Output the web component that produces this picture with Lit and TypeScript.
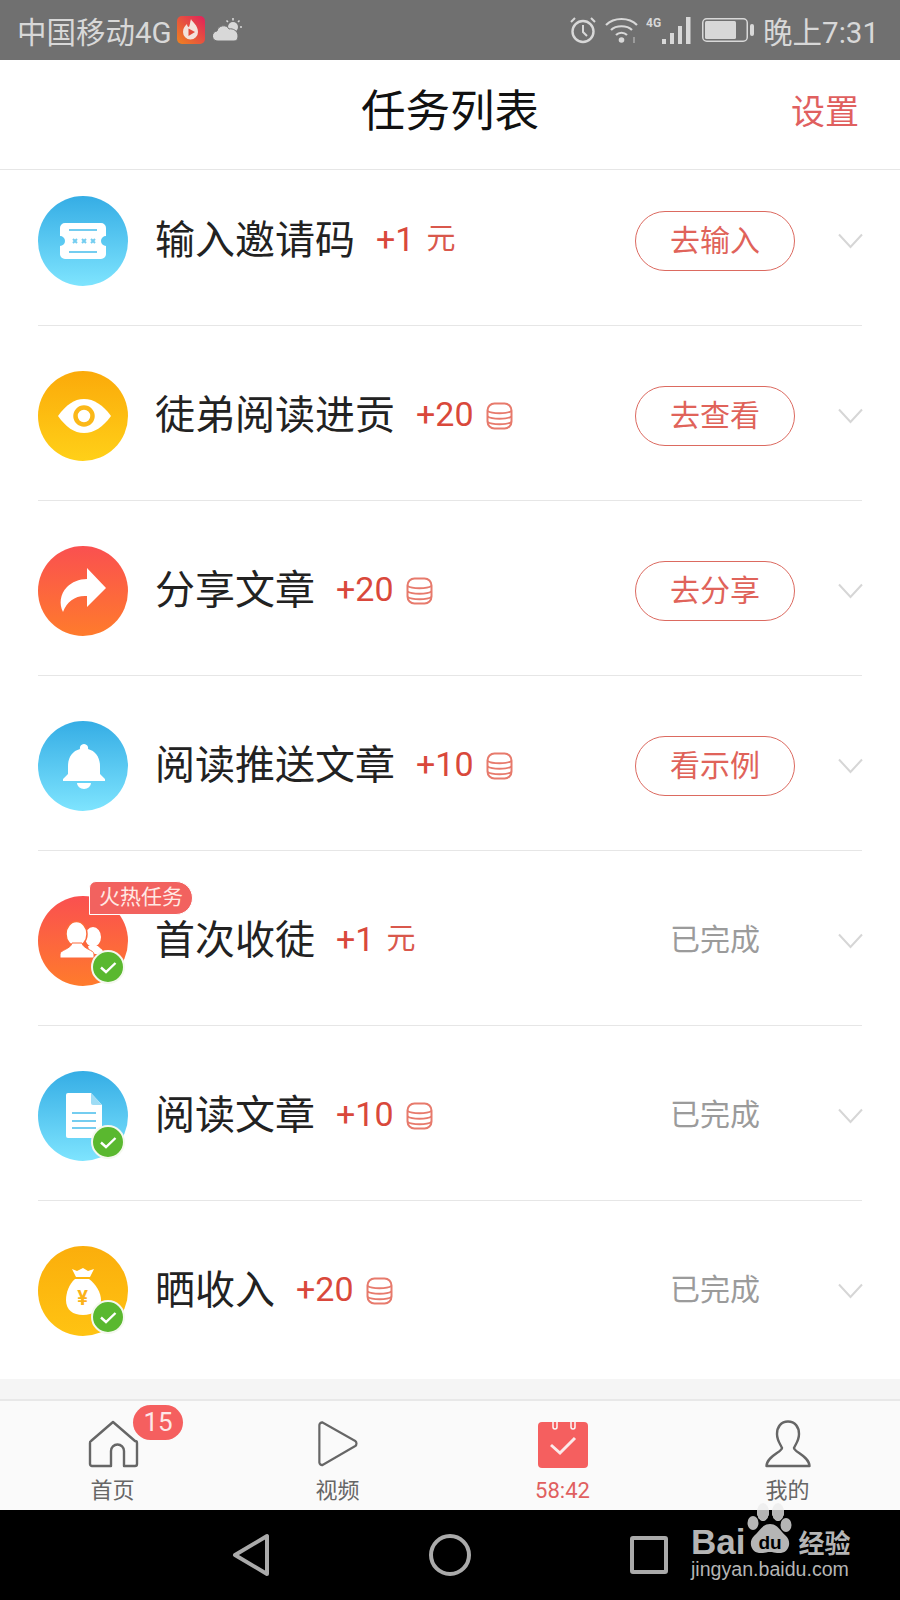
import { LitElement, html, css, svg, unsafeCSS } from 'lit';
import { customElement } from 'lit/decorators.js';

const FONT = unsafeCSS(`Roboto, "Noto Sans CJK SC", sans-serif`);

// icon glyphs, all drawn in the 90x90 box of the round task icon
const ICONS: Record<string, unknown> = {
  ticket: svg`
    <path fill="#fff" d="M27 27H63a5 5 0 0 1 5 5V40a5 5 0 0 0 0 10V58a5 5 0 0 1-5 5H27a5 5 0 0 1-5-5V50a5 5 0 0 0 0-10V32a5 5 0 0 1 5-5z" />
    <path stroke="#74cdf0" stroke-width="2" fill="none" d="M31 34H59M31 56H59M35 43l4 4M39 43l-4 4M44 43l4 4M48 43l-4 4M53 43l4 4M57 43l-4 4" />`,
  eye: svg`
    <path fill="#fff" d="M20 45C28 34 36 28 46 28C56 28 65 34 73 45C65 56 56 62 46 62C36 62 28 56 20 45Z" />
    <circle cx="46" cy="45" r="8.5" fill="#fff" stroke="#fbb818" stroke-width="4.5" />`,
  share: svg`
    <path fill="#fff" d="M49 22L68 42L49 61V50C38 49 29 55 25 66C21 58 22 48 29 41C34 36 41 33 49 33Z" />`,
  bell: svg`
    <path fill="#fff" d="M46 23a4 4 0 0 1 4 5C58 30 62 37 62 45V53L67 58V60H25V58L30 53V45C30 37 34 30 42 28a4 4 0 0 1 4-5Z" />
    <path fill="#fff" d="M39 62H53a7 6 0 0 1-14 0Z" />`,
  users: svg`
    <ellipse cx="55" cy="41" rx="8" ry="10" fill="#fff" />
    <path fill="#fff" d="M50 50H60C61 52 65 53 65 56V58H52Z" />
    <ellipse cx="38.5" cy="38" rx="10.5" ry="12.5" fill="#fff" stroke="#fc6a3c" stroke-width="1.5" />
    <path fill="#fff" stroke="#fc6a3c" stroke-width="1" d="M22 62V58C22 54 33 53 34 47H44C45 53 56 54 56 58V62Z" />`,
  doc: svg`
    <path fill="#fff" d="M30 22H53L64 34V65a2 2 0 0 1-2 2H30a2 2 0 0 1-2-2V24a2 2 0 0 1 2-2Z" />
    <path fill="#9edcf5" d="M53 22L64 34H55a2 2 0 0 1-2-2Z" />
    <path stroke="#74cdf0" stroke-width="2" fill="none" d="M34 42H58M34 50H58M34 57H58" />`,
  bag: svg`
    <path fill="#fff" d="M34 23L39 25L45 22L50 25L56 23L52 31H38Z" />
    <path fill="#fff" d="M37 33H51C58 38 63 47 63 54C63 64 55 69 45 69C35 69 28 64 28 54C28 47 31 38 37 33Z" />
    <text x="44.5" y="59" text-anchor="middle" font-size="20" font-weight="700" fill="#fbb21a" font-family="Roboto, sans-serif">¥</text>`,
};

const GRADIENTS: Record<string, [string, string]> = {
  blue: ['#35ade5', '#7ee4fe'],
  yellow: ['#fbaa0a', '#ffd018'],
  red: ['#fa5050', '#ff7b2c'],
  gold: ['#fbae0c', '#ffc312'],
};

interface Task {
  title: string;
  amount: string;
  unit: 'yuan' | 'coin';
  icon: string;
  color: string;
  action?: string;
  hot?: boolean;
}

const TASKS: Task[] = [
  { title: '输入邀请码', amount: '+1', unit: 'yuan', icon: 'ticket', color: 'blue', action: '去输入' },
  { title: '徒弟阅读进贡', amount: '+20', unit: 'coin', icon: 'eye', color: 'yellow', action: '去查看' },
  { title: '分享文章', amount: '+20', unit: 'coin', icon: 'share', color: 'red', action: '去分享' },
  { title: '阅读推送文章', amount: '+10', unit: 'coin', icon: 'bell', color: 'blue', action: '看示例' },
  { title: '首次收徒', amount: '+1', unit: 'yuan', icon: 'users', color: 'red', hot: true },
  { title: '阅读文章', amount: '+10', unit: 'coin', icon: 'doc', color: 'blue' },
  { title: '晒收入', amount: '+20', unit: 'coin', icon: 'bag', color: 'gold' },
];

@customElement('status-bar')
export class StatusBar extends LitElement {
  static styles = css`
    :host {
      display: flex;
      align-items: center;
      height: 60px;
      padding: 0 21px 0 17px;
      background: #707070;
      color: #d8d8d8;
      font-family: ${FONT};
      font-size: 29.5px;
    }
    .left,
    .right {
      display: flex;
      align-items: center;
    }
    .right {
      margin-left: auto;
    }
    svg {
      display: block;
    }
    .app {
      margin-left: 5px;
    }
    .weather {
      margin-left: 8px;
    }
    .wifi {
      margin-left: 8px;
    }
    .signal {
      margin-left: 8px;
    }
    .battery {
      margin-left: 11px;
    }
    .time {
      margin-left: 9px;
    }
  `;

  render() {
    return html`
      <div class="left">
        <span>中国移动4G</span>
        <svg class="app" width="28" height="28" viewBox="0 0 28 28">
          <defs>
            <linearGradient id="app" x1="1" y1="0" x2="0" y2="1">
              <stop offset="0" stop-color="#e0205c" />
              <stop offset="1" stop-color="#ee8420" />
            </linearGradient>
          </defs>
          <rect width="28" height="28" rx="5" fill="url(#app)" />
          <path fill="#f3e3dc" d="M14 3C15 6 21 9 21 16a7.5 7.5 0 0 1-15 0C6 12 8 10 10 8C10 10 11 11 12 11C13 9 13 6 14 3Z" />
          <path fill="#e24a3a" d="M11.5 12.5L18 16L11.5 20Z" />
        </svg>
        <svg class="weather" width="30" height="24" viewBox="0 0 30 24">
          <circle cx="20" cy="9" r="5" fill="#d8d8d8" />
          <path stroke="#d8d8d8" stroke-width="1.6" d="M20 0V2.5M26.5 2.5L25 4M29 9H27M13.5 2.5L15 4" />
          <path fill="#d8d8d8" stroke="#707070" stroke-width="1" d="M5 23a5 5 0 0 1-1-10C5 7 14 6 16 11C20 10 25 13 25 18C25 21 24 23 21 23Z" />
        </svg>
      </div>
      <div class="right">
        <svg width="28" height="28" viewBox="0 0 28 28" fill="none" stroke="#d8d8d8">
          <circle cx="14" cy="15.5" r="10.5" stroke-width="2.4" />
          <path stroke-width="2" d="M14 9V16L18 20M2 6L6 2M26 6L22 2" />
        </svg>
        <svg class="wifi" width="33" height="28" viewBox="0 0 33 28" fill="none" stroke="#d8d8d8" stroke-width="2.2">
          <path d="M1 9C9 1 24 1 32 9M6 14C11 9 22 9 27 14M11 19C14 16 19 16 22 19" />
          <circle cx="16.5" cy="24" r="2.8" fill="#d8d8d8" stroke="none" />
          <path d="M29 21V27" stroke-width="1.2" opacity="0.7" />
        </svg>
        <svg class="signal" width="45" height="28" viewBox="0 0 45 28">
          <text x="0" y="11" font-size="12" font-weight="700" fill="#d8d8d8" font-family="Roboto, sans-serif">4G</text>
          <g fill="#d8d8d8">
            <rect x="16" y="23" width="4" height="5" />
            <rect x="24" y="17" width="4" height="11" />
            <rect x="32" y="10" width="4" height="18" />
            <rect x="40" y="1" width="4.5" height="27" />
          </g>
        </svg>
        <svg class="battery" width="52" height="24" viewBox="0 0 52 24">
          <rect x="0.75" y="0.75" width="44.5" height="22.5" rx="4" fill="none" stroke="#d8d8d8" stroke-width="1.5" />
          <rect x="3" y="3" width="31" height="18" rx="1.5" fill="#d8d8d8" />
          <rect x="48" y="6" width="4" height="12" rx="2" fill="#d8d8d8" />
        </svg>
        <span class="time">晚上7:31</span>
      </div>
    `;
  }
}

@customElement('task-row')
export class TaskRow extends LitElement {
  static properties = { task: { attribute: false } };
  declare task: Task;

  static styles = css`
    :host {
      display: block;
      padding: 0 38px;
      background: #fff;
      font-family: ${FONT};
    }
    :host(:first-child) .row {
      padding-top: 26px;
    }
    :host(:last-child) .row {
      border-bottom: 0;
      padding-bottom: 43px;
    }
    .row {
      display: flex;
      align-items: center;
      padding: 45px 0 39px;
      border-bottom: 1px solid #e6e6e6;
    }
    .icon {
      position: relative;
      flex: none;
      width: 90px;
      height: 90px;
      margin-right: 27px;
    }
    .icon > svg {
      display: block;
    }
    .check {
      position: absolute;
      left: 53px;
      top: 54px;
    }
    .hot {
      position: absolute;
      left: 51px;
      top: -15px;
      height: 32px;
      padding: 0 9px;
      background: #f2625f;
      border: 1.5px solid #fff;
      border-radius: 7px 17px 17px 0;
      color: #ffe9e4;
      font-size: 21px;
      line-height: 31px;
      white-space: nowrap;
    }
    .title {
      color: #222;
      font-size: 40px;
      line-height: 50px;
      white-space: nowrap;
    }
    .reward {
      display: flex;
      align-items: center;
      margin-left: 21px;
      color: #d9483b;
      font-size: 34px;
      line-height: 50px;
    }
    .amount {
      padding-bottom: 4px;
    }
    .yuan {
      margin-left: 12px;
      padding-bottom: 4px;
      font-size: 29px;
      color: #d9584c;
    }
    .coins {
      display: block;
      margin-left: 12px;
    }
    .action {
      flex: none;
      display: flex;
      align-items: center;
      justify-content: center;
      box-sizing: border-box;
      width: 160px;
      height: 60px;
      margin-left: auto;
      padding-bottom: 8px;
      font-size: 30px;
      color: #9b9b9b;
    }
    .action.btn {
      padding-bottom: 6px;
      border: 1px solid #dc6a60;
      border-radius: 30px;
      color: #e0635a;
    }
    .chevron {
      flex: none;
      display: block;
      margin-left: 43px;
      margin-right: -1px;
    }
  `;

  render() {
    const t = this.task;
    const [from, to] = GRADIENTS[t.color];
    const gid = `g-${t.icon}`;
    return html`
      <div class="row">
        <div class="icon">
          <svg width="90" height="90" viewBox="0 0 90 90">
            <defs>
              <linearGradient id=${gid} x1="0" y1="0" x2="0" y2="1">
                <stop offset="0" stop-color=${from} />
                <stop offset="1" stop-color=${to} />
              </linearGradient>
            </defs>
            <circle cx="45" cy="45" r="45" fill="url(#${gid})" />
            ${ICONS[t.icon]}
          </svg>
          ${t.action
            ? ''
            : html`<svg class="check" width="34" height="34" viewBox="0 0 34 34">
                <circle cx="17" cy="17" r="16" fill="#5ab82f" stroke="#f4f8ee" stroke-width="2" />
                <path d="M10 17.5L15 22L24.5 13" fill="none" stroke="#fff" stroke-width="2.4" />
              </svg>`}
          ${t.hot ? html`<div class="hot">火热任务</div>` : ''}
        </div>
        <span class="title">${t.title}</span>
        <div class="reward">
          <span class="amount">${t.amount}</span>
          ${t.unit === 'yuan'
            ? html`<span class="yuan">元</span>`
            : html`<svg class="coins" width="27" height="28" viewBox="0 0 27 28" fill="none" stroke="#e77a6c" stroke-width="2">
                <rect x="1.5" y="1.5" width="24" height="25" rx="7" />
                <path d="M1.5 9C6 12 21 12 25.5 9M1.5 14.5C6 17.5 21 17.5 25.5 14.5M1.5 20C6 23 21 23 25.5 20" />
              </svg>`}
        </div>
        ${t.action
          ? html`<div class="action btn">${t.action}</div>`
          : html`<div class="action">已完成</div>`}
        <svg class="chevron" width="25" height="16" viewBox="0 0 25 16" fill="none" stroke="#d6d6d6" stroke-width="2">
          <path d="M1 1.5L12.5 14L24 1.5" />
        </svg>
      </div>
    `;
  }
}

@customElement('tab-bar')
export class TabBar extends LitElement {
  static styles = css`
    :host {
      display: grid;
      grid-template-columns: repeat(4, 225px);
      height: 109px;
      border-top: 2px solid #e8e8e8;
      background: #fafafa;
      font-family: ${FONT};
    }
    .tab {
      position: relative;
      display: flex;
      flex-direction: column;
      align-items: center;
      padding-top: 19px;
      color: #666;
      font-size: 22px;
      line-height: 30px;
    }
    .tab svg {
      display: block;
      margin-bottom: 8px;
    }
    .on {
      color: #e0605f;
    }
    .badge {
      position: absolute;
      left: 133px;
      top: 4px;
      width: 50px;
      height: 35px;
      border-radius: 18px;
      background: #f55f5f;
      color: #fde8e8;
      font-size: 26px;
      line-height: 35px;
      text-align: center;
    }
  `;

  render() {
    return html`
      <div class="tab">
        <svg width="52" height="48" viewBox="0 0 52 48" fill="none" stroke="#666" stroke-width="2.4" stroke-linejoin="round">
          <path d="M26 2L48 21a2 2 0 0 1 2 2V44a2 2 0 0 1-2 2H37V31a6.5 6.5 0 0 0-13 0V46H5a2 2 0 0 1-2-2V23a2 2 0 0 1 1-2Z" />
        </svg>
        <span>首页</span>
        <span class="badge">15</span>
      </div>
      <div class="tab">
        <svg width="40" height="48" viewBox="0 0 44 48" preserveAspectRatio="none" fill="none" stroke="#666" stroke-width="2.4" stroke-linejoin="round">
          <path d="M5 2.5L41 21a3 3 0 0 1 0 5L5 45a3 3 0 0 1-3.5-2.5V5a3 3 0 0 1 3.5-2.5Z" />
        </svg>
        <span>视频</span>
      </div>
      <div class="tab on">
        <svg width="50" height="48" viewBox="0 0 50 48">
          <rect y="2" width="50" height="46" rx="4" fill="#f55f5f" />
          <path d="M15 0V7a2 2 0 0 0 4 0V0M33 0V7a2 2 0 0 0 4 0V0" fill="none" stroke="#fafafa" stroke-width="1.5" />
          <path d="M13 25L22 33L37 18" fill="none" stroke="#fbeaea" stroke-width="3" />
        </svg>
        <span>58:42</span>
      </div>
      <div class="tab">
        <svg width="46" height="48" viewBox="0 0 46 48" fill="none" stroke="#666" stroke-width="2.4" stroke-linejoin="round">
          <path d="M23 1.5C30 1.5 34 7 34 14C34 21 30 25 29 28C29 32 44 36 44.5 46H1.5C2 36 17 32 17 28C16 25 12 21 12 14C12 7 16 1.5 23 1.5Z" />
        </svg>
        <span>我的</span>
      </div>
    `;
  }
}

@customElement('nav-bar')
export class NavBar extends LitElement {
  static styles = css`
    :host {
      position: relative;
      display: flex;
      align-items: center;
      justify-content: space-between;
      box-sizing: border-box;
      height: 90px;
      padding: 0 232px;
      background: #000;
    }
    svg {
      display: block;
    }
    .mark {
      position: absolute;
      left: 691px;
      top: -14px;
      color: #b5b5b5;
      font-family: 'Liberation Sans', 'Noto Sans CJK SC', sans-serif;
    }
    .mark .top {
      display: flex;
      align-items: flex-end;
      height: 64px;
    }
    .bai {
      font-size: 35px;
      font-weight: 700;
      line-height: 36px;
    }
    .paw {
      align-self: flex-start;
      margin-top: 7px;
    }
    .jing {
      margin-left: 3px;
      font-size: 26px;
      font-weight: 700;
      line-height: 36px;
      font-family: 'Noto Sans CJK SC', sans-serif;
    }
    .url {
      margin-top: -3px;
      font-size: 19.6px;
      line-height: 24px;
      white-space: nowrap;
    }
  `;

  render() {
    return html`
      <svg width="38" height="44" viewBox="0 0 38 44" fill="none" stroke="#aaa" stroke-width="4" stroke-linejoin="round">
        <path d="M35 3V41L3 22Z" />
      </svg>
      <svg width="42" height="42" viewBox="0 0 42 42" fill="none" stroke="#aaa" stroke-width="4">
        <circle cx="21" cy="21" r="19" />
      </svg>
      <svg width="38" height="38" viewBox="0 0 38 38" fill="none" stroke="#aaa" stroke-width="4" stroke-linejoin="round">
        <rect x="2" y="2" width="34" height="34" rx="1" />
      </svg>
      <div class="mark">
        <div class="top">
          <span class="bai">Bai</span>
          <svg class="paw" width="50" height="50" viewBox="0 0 50 50">
            <defs>
              <clipPath id="below-bar"><rect y="7" width="50" height="43" /></clipPath>
            </defs>
            <ellipse cx="18" cy="9" rx="6" ry="9" fill="#efefef" />
            <ellipse cx="33" cy="9" rx="6" ry="9" fill="#efefef" />
            <g fill="#b5b5b5">
              <ellipse cx="18" cy="9" rx="6" ry="9" clip-path="url(#below-bar)" />
              <ellipse cx="33" cy="9" rx="6" ry="9" clip-path="url(#below-bar)" />
              <ellipse cx="8" cy="20" rx="5.5" ry="7" />
              <ellipse cx="41" cy="22" rx="5.5" ry="7" />
              <path d="M25 21C33 21 35 28 41 33C47 39 44 49 36 50C31 50.5 29 49 25 49C21 49 19 50.5 14 50C6 49 3 39 9 33C15 28 17 21 25 21Z" />
            </g>
            <text x="25" y="46" text-anchor="middle" font-size="19" font-weight="700" fill="#000" font-family="Liberation Sans, sans-serif">du</text>
          </svg>
          <span class="jing">经验</span>
        </div>
        <div class="url">jingyan.baidu.com</div>
      </div>
    `;
  }
}

@customElement('app-root')
export class AppRoot extends LitElement {
  static styles = css`
    :host {
      display: flex;
      flex-direction: column;
      width: 900px;
      height: 1600px;
      background: #f5f5f5;
      font-family: ${FONT};
    }
    .header {
      display: grid;
      grid-template-columns: 1fr auto 1fr;
      align-items: center;
      height: 109px;
      padding-right: 41px;
      background: #fff;
      border-bottom: 1px solid #e6e6e6;
    }
    .header h1 {
      grid-column: 2;
      margin: 0 0 0 41px;
      padding-bottom: 14px;
      color: #111;
      font-size: 44.5px;
      font-weight: 400;
    }
    .settings {
      justify-self: end;
      padding-bottom: 10px;
      color: #e0605f;
      font-size: 34px;
    }
    .list {
      background: #fff;
    }
    .gap {
      flex: 1;
    }
  `;

  render() {
    return html`
      <status-bar></status-bar>
      <div class="header">
        <h1>任务列表</h1>
        <span class="settings">设置</span>
      </div>
      <div class="list">
        ${TASKS.map((t) => html`<task-row .task=${t}></task-row>`)}
      </div>
      <div class="gap"></div>
      <tab-bar></tab-bar>
      <nav-bar></nav-bar>
    `;
  }
}
